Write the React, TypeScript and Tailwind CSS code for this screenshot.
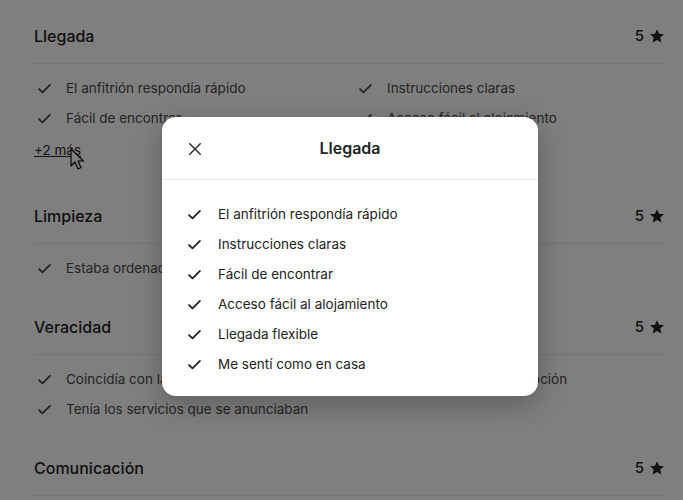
import React from 'react';

type Section = {
  title: string;
  rating: number;
  items: string[];
  more?: number;
};

const SECTIONS: Section[] = [
  {
    title: 'Llegada',
    rating: 5,
    items: [
      'El anfitrión respondía rápido',
      'Instrucciones claras',
      'Fácil de encontrar',
      'Acceso fácil al alojamiento',
    ],
    more: 2,
  },
  { title: 'Limpieza', rating: 5, items: ['Estaba ordenado'] },
  {
    title: 'Veracidad',
    rating: 5,
    items: ['Coincidía con las fotos', 'Coincidía con la descripción', 'Tenía los servicios que se anunciaban'],
  },
  { title: 'Comunicación', rating: 5, items: [] },
];

const MODAL_ITEMS = [
  'El anfitrión respondía rápido',
  'Instrucciones claras',
  'Fácil de encontrar',
  'Acceso fácil al alojamiento',
  'Llegada flexible',
  'Me sentí como en casa',
];

const FONT = { fontFamily: 'Inter, "Noto Sans", Arial, sans-serif' };

const CheckIcon: React.FC = () => (
  <svg viewBox="0 0 16 16" className="w-[15px] h-[15px] shrink-0" fill="none" aria-hidden="true">
    <path d="M2.2 8.6l3.6 3.6L13.8 4.2" stroke="currentColor" strokeWidth="1.9" strokeLinecap="round" strokeLinejoin="round" />
  </svg>
);

const StarIcon: React.FC = () => (
  <svg viewBox="0 0 24 24" className="w-[16px] h-[16px]" fill="currentColor" aria-hidden="true">
    <path d="M12 1.8l3 6.9 7.5.7-5.7 5 1.7 7.4L12 17.9l-6.5 3.9 1.7-7.4-5.7-5 7.5-.7z" />
  </svg>
);

const CloseIcon: React.FC = () => (
  <svg viewBox="0 0 16 16" className="w-[14px] h-[14px]" fill="none" aria-hidden="true">
    <path d="M2 2l12 12M14 2L2 14" stroke="currentColor" strokeWidth="1.6" strokeLinecap="round" />
  </svg>
);

/** Page with category ratings, dimmed behind the "Llegada" detail dialog. */
export default function App() {
  return (
    <div className="relative w-[683px] h-[500px] overflow-hidden bg-white" style={FONT}>
      {/* Ratings list */}
      <div className="pt-6 pl-[34px] pr-[18px]">
        {SECTIONS.map((section) => (
          <section key={section.title} className="pb-[37px]">
            <div className="flex items-center justify-between h-6 pb-[15px] box-content border-b border-[#ebebeb]">
              <h3 className="text-[16px] font-medium text-[#222222]">{section.title}</h3>
              <div className="flex items-center gap-[5px] text-[15px] font-medium text-[#222222]">
                <span>{section.rating}</span>
                <StarIcon />
              </div>
            </div>
            {section.items.length > 0 && (
              <div className="pt-[14px] grid grid-cols-[321px_1fr] gap-y-[10px]">
                {section.items.map((item) => (
                  <div key={item} className="flex items-center gap-[14px] h-5 pl-[3px] text-[13.5px] text-[#484848]">
                    <CheckIcon />
                    <span>{item}</span>
                  </div>
                ))}
              </div>
            )}
            {section.more && (
              <div className="mt-[10px] mb-[5px] leading-6 text-[13.5px] text-[#222222] underline">
                +{section.more} más
              </div>
            )}
          </section>
        ))}
      </div>

      {/* Mouse cursor */}
      <svg className="absolute left-[70px] top-[148px] w-[14px] h-[22px]" viewBox="0 0 14 22" aria-hidden="true">
        <path d="M1 1v17l4-4 3 7 3-1.4-3-6.6h5.5z" fill="#fff" stroke="#000" strokeWidth="1.1" strokeLinejoin="round" />
      </svg>

      {/* Overlay */}
      <div className="absolute inset-0 bg-black/50" />

      {/* Dialog */}
      <div className="absolute left-[162px] top-[117px] w-[376px] rounded-[14px] bg-white shadow-[0_8px_28px_rgba(0,0,0,0.28)]">
        <div className="relative flex items-center justify-center h-[63px] border-b border-[#ebebeb]">
          <button type="button" className="absolute left-[25px] top-[24px] p-[1px] text-[#222222]">
            <CloseIcon />
          </button>
          <h2 className="text-[16px] font-semibold text-[#222222]">Llegada</h2>
        </div>
        <ul className="pt-[24px] pb-[22px] pl-[25px] flex flex-col gap-[10px]">
          {MODAL_ITEMS.map((item) => (
            <li key={item} className="flex items-center gap-[16px] h-5 text-[13.5px] text-[#222222]">
              <CheckIcon />
              <span>{item}</span>
            </li>
          ))}
        </ul>
      </div>
    </div>
  );
}
